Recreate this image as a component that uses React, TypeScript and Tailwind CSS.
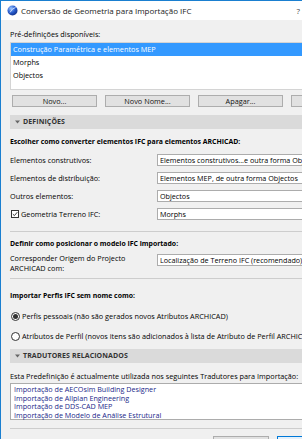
import React from "react";

function Dropdown({ text }: { text: string }) {
  return (
    <div className="h-[12px] w-[200px] bg-white border border-[#acacac] flex items-center pl-[2px] whitespace-nowrap overflow-hidden text-[7.2px]">
      {text}
    </div>
  );
}

function Row({ label, value, check }: { label: string; value: string; check?: boolean }) {
  return (
    <div className="flex items-center mt-[6px] h-[12px]">
      <div className="w-[147px] flex items-center whitespace-nowrap">
        {check && (
          <span className="w-[8px] h-[8px] border border-[#333] bg-white mr-[2px] ml-[1px] flex items-center justify-center">
            <svg width="6" height="6" viewBox="0 0 6 6">
              <path d="M0.8 3.1 L2.4 4.6 L5.3 1.2" stroke="#222" strokeWidth="0.9" fill="none" />
            </svg>
          </span>
        )}
        {label}
      </div>
      <Dropdown text={value} />
    </div>
  );
}

function Section({ title }: { title: string }) {
  return (
    <div className="h-[14px] bg-[#dadada] flex items-center pl-[5px] font-bold text-[7px] text-[#333] tracking-[0.1px]">
      <svg width="5" height="4" viewBox="0 0 5 4" className="mr-[3px]">
        <path d="M0 0.5 L5 0.5 L2.5 3.5 Z" fill="#666" />
      </svg>
      {title}
    </div>
  );
}

function Radio({ checked, label }: { checked?: boolean; label: string }) {
  return (
    <div className="flex items-center h-[12px] whitespace-nowrap">
      <span className="w-[9px] h-[9px] shrink-0 rounded-full border border-[#333] bg-white flex items-center justify-center mr-[2px] ml-[1px]">
        {checked && <span className="w-[5px] h-[5px] rounded-full bg-[#333]" />}
      </span>
      {label}
    </div>
  );
}

export default function App() {
  return (
    <div className="w-[302px] h-[439px] overflow-hidden bg-[#f0f0f0] border-l border-t border-[#1a7fd0] font-['Open_Sans',sans-serif] text-[7.3px] text-black">
      <div className="h-[19px] bg-white flex items-center pl-[6px] pr-[2px] text-[8px] text-[#222]">
        <svg width="11" height="11" viewBox="0 0 11 11" className="mr-[3px]">
          <defs>
            <radialGradient id="g" cx="0.35" cy="0.3" r="0.8">
              <stop offset="0" stopColor="#9cc6ff" />
              <stop offset="0.5" stopColor="#2b5fd0" />
              <stop offset="1" stopColor="#0d2a80" />
            </radialGradient>
          </defs>
          <circle cx="5.5" cy="5.5" r="5" fill="url(#g)" />
          <path d="M3 7.5 Q5 3 8.5 2.5" stroke="#e8f0ff" strokeWidth="0.8" fill="none" />
        </svg>
        <span className="flex-1 whitespace-nowrap">Conversão de Geometria para Importação IFC</span>
        <span className="text-[#444]">?</span>
      </div>
      <div className="w-[400px] pl-[9px] flex flex-col">
        <div className="mt-[8px] h-[12px] leading-[12px]">Pré-definições disponíveis:</div>
        <div className="mt-[2px] h-[48px] bg-white border border-[#d4d4d4] border-r-0">
          <div className="h-[13px] bg-[#3399ff] text-white flex items-center pl-[2px]">
            Construção Paramétrica e elementos MEP
          </div>
          <div className="h-[13px] flex items-center pl-[2px]">Morphs</div>
          <div className="h-[13px] flex items-center pl-[2px]">Objectos</div>
        </div>
        <div className="mt-[5px] flex gap-[8px] pl-[2px] h-[12px]">
          {["Novo...", "Novo Nome...", "Apagar...", ""].map((t, i) => (
            <div
              key={i}
              className="w-[85px] h-[12px] bg-[#e1e1e1] border border-[#adadad] flex items-center justify-center text-[#111]"
            >
              {t}
            </div>
          ))}
        </div>
        <div className="mt-[8px]">
          <Section title="DEFINIÇÕES" />
        </div>
        <div className="mt-[7px] h-[12px] leading-[12px] font-bold text-[6.9px] whitespace-nowrap">
          Escolher como converter elementos IFC para elementos ARCHICAD:
        </div>
        <Row label="Elementos construtivos:" value="Elementos construtivos...e outra forma Objectos" />
        <Row label="Elementos de distribuição:" value="Elementos MEP, de outra forma Objectos" />
        <Row label="Outros elementos:" value="Objectos" />
        <Row label="Geometria Terreno IFC:" value="Morphs" check />
        <div className="mt-[11px] border-t border-[#cdcdcd]" />
        <div className="mt-[6px] h-[12px] leading-[12px] font-bold text-[6.9px] whitespace-nowrap">
          Definir como posicionar o modelo IFC importado:
        </div>
        <div className="mt-[3px] flex items-start">
          <div className="w-[147px] leading-[10px]">
            Corresponder Origem do Projecto
            <br />
            ARCHICAD com:
          </div>
          <div className="mt-[1px]">
            <Dropdown text="Localização de Terreno IFC (recomendado)" />
          </div>
        </div>
        <div className="mt-[5px] border-t border-[#cdcdcd]" />
        <div className="mt-[11px] h-[12px] leading-[12px] font-bold text-[6.9px] whitespace-nowrap">
          Importar Perfis IFC sem nome como:
        </div>
        <div className="mt-[8px]">
          <Radio checked label="Perfis pessoais (não são gerados novos Atributos ARCHICAD)" />
        </div>
        <div className="mt-[8px]">
          <Radio label="Atributos de Perfil (novos itens são adicionados à lista de Atributo de Perfil ARCHICAD)" />
        </div>
        <div className="mt-[7px]">
          <Section title="TRADUTORES RELACIONADOS" />
        </div>
        <div className="mt-[7px] h-[12px] leading-[12px] whitespace-nowrap">
          Esta Predefinição é actualmente utilizada nos seguintes Tradutores para Importação:
        </div>
        <div className="mt-[1px] h-[37px] bg-white border border-[#acacac] border-r-0 pt-[1px] pl-[3px] leading-[8.7px] text-[7.2px] text-[#1b1f8a] whitespace-nowrap">
          <div>Importação de AECOsim Building Designer</div>
          <div>Importação de Allplan Engineering</div>
          <div>Importação de DDS-CAD MEP</div>
          <div>Importação de Modelo de Análise Estrutural</div>
        </div>
        <div className="mt-[8px] border-t border-[#cdcdcd]" />
        <div className="mt-[7px] flex gap-[8px] pl-[203px]">
          <div className="w-[56px] h-[14px] bg-[#e1e1e1] border border-[#adadad]" />
          <div className="w-[56px] h-[14px] bg-[#e5f1fb] border border-[#0078d7]" />
        </div>
      </div>
    </div>
  );
}
